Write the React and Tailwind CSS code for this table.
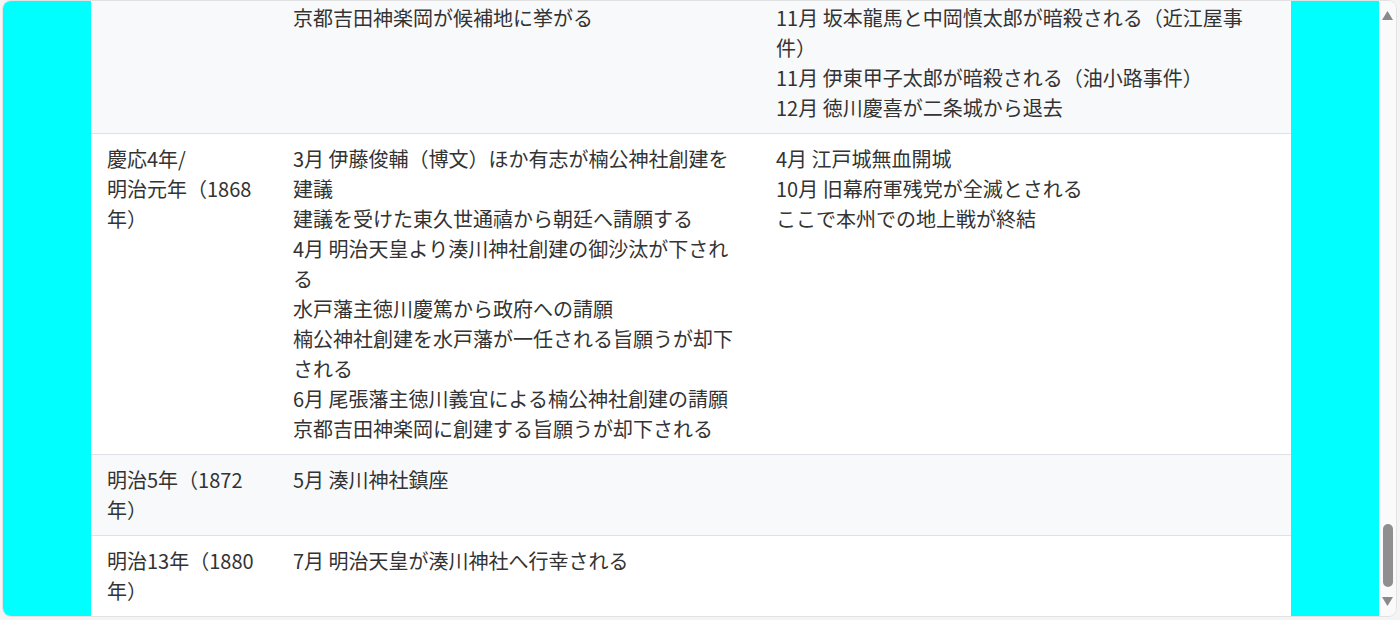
import React from 'react';

// the page is scrolled to the bottom: only the tail of the 1867 row shows
const rows = [
    {
        year: '',
        events: ['京都吉田神楽岡が候補地に挙がる'],
        history: [
            '11月 坂本龍馬と中岡慎太郎が暗殺される（近江屋事件）',
            '11月 伊東甲子太郎が暗殺される（油小路事件）',
            '12月 徳川慶喜が二条城から退去',
        ],
    },
    {
        year: (
            <>
                慶応4年/
                <br />
                明治元年（1868年）
            </>
        ),
        events: [
            '3月 伊藤俊輔（博文）ほか有志が楠公神社創建を建議',
            '建議を受けた東久世通禧から朝廷へ請願する',
            '4月 明治天皇より湊川神社創建の御沙汰が下される',
            '水戸藩主徳川慶篤から政府への請願',
            '楠公神社創建を水戸藩が一任される旨願うが却下される',
            '6月 尾張藩主徳川義宜による楠公神社創建の請願',
            '京都吉田神楽岡に創建する旨願うが却下される',
        ],
        history: ['4月 江戸城無血開城', '10月 旧幕府軍残党が全滅とされる', 'ここで本州での地上戦が終結'],
    },
    {
        year: '明治5年（1872年）',
        events: ['5月 湊川神社鎮座'],
        history: [],
    },
    {
        year: '明治13年（1880年）',
        events: ['7月 明治天皇が湊川神社へ行幸される'],
        history: [],
    },
];

function Lines({ items }) {
    return (
        <>
            {items.map((line, i) => (
                <div key={i}>{line}</div>
            ))}
        </>
    );
}

function Scrollbar() {
    return (
        <div className="w-[17px] shrink-0 bg-[#fafafa] flex flex-col items-center justify-between pt-[10px] pb-[10px]">
            <svg width="11" height="9" viewBox="0 0 11 9">
                <path d="M5.5 0 L11 9 L0 9 Z" fill="#8a8a8a" />
            </svg>
            <div className="flex flex-col items-center">
                <div className="w-[10px] h-[63px] rounded-full bg-[#8f8f8f] mb-[10px]" />
                <svg width="11" height="9" viewBox="0 0 11 9">
                    <path d="M0 0 L11 0 L5.5 9 Z" fill="#8a8a8a" />
                </svg>
            </div>
        </div>
    );
}

export default function App() {
    return (
        <div className="w-[1400px] h-[620px] bg-[#f4f4f4] pl-[2px] pr-[3px] pt-0 pb-[3px]" style={{ fontFamily: '"Noto Sans CJK JP", "Noto Sans", sans-serif' }}>
            <div className="h-[617px] flex border border-[#e2e2e2] rounded-[9px] overflow-hidden bg-white">
                <div className="flex-1 bg-[#00ffff] px-[88px] overflow-hidden flex flex-col justify-end">
                    <table className="w-full table-fixed shrink-0 border-collapse text-[20px] leading-[30px] text-[#333333]">
                        <colgroup>
                            <col className="w-[186px]" />
                            <col className="w-[483px]" />
                            <col className="w-[531px]" />
                        </colgroup>
                        <tbody>
                            {rows.map((row, i) => (
                                <tr
                                    key={i}
                                    className={`${i % 2 === 0 ? 'bg-[#f8f9fa]' : 'bg-white'} ${i < rows.length - 1 ? 'border-b border-[#dee2e6]' : ''}`}
                                >
                                    <td className="align-top px-4 py-[10px]">{row.year}</td>
                                    <td className="align-top px-4 py-[10px]">
                                        <Lines items={row.events} />
                                    </td>
                                    <td className="align-top pl-4 pr-6 py-[10px]">
                                        <Lines items={row.history} />
                                    </td>
                                </tr>
                            ))}
                        </tbody>
                    </table>
                </div>
                <Scrollbar />
            </div>
        </div>
    );
}
